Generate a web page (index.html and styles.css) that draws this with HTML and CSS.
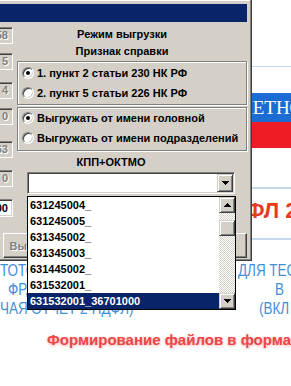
FILE: index.html
```html
<!DOCTYPE html>
<html lang="ru">
<head>
<meta charset="utf-8">
<title>Режим выгрузки</title>
<link rel="stylesheet" href="styles.css">
</head>
<body>
<div class="site">
  <div class="site-top"></div>
  <div class="band-blue"><span class="band-text">ОТЧЕТНОСТЬ</span></div>
  <div class="band-red"></div>
  <div class="site-gap"></div>
  <div class="headline"><span class="headline-text">2-НДФЛ 2024</span></div>
  <div class="lines">
    <div class="line"><span class="seg seg-a1">ТОТО</span><span class="seg">ДЛЯ ТЕСТ</span></div>
    <div class="line"><span class="seg seg-a2">ФР,</span><span class="seg">В</span></div>
    <div class="line"><span class="seg seg-a3">ЧАЯ ОТЧЕТ 2-НДФЛ)</span><span class="seg">(ВКЛ</span></div>
  </div>
  <div class="promo">Формирование файлов в формате</div>
</div>

<div class="win">
  <div class="titlebar"></div>
  <div class="client">
    <div class="side">
      <div class="field f1">58</div>
      <div class="field f2">5</div>
      <div class="field f3">4</div>
      <div class="field f4">0</div>
      <div class="field f5">63</div>
      <div class="field f6">0</div>
      <div class="field field-on f7">00</div>
    </div>
    <div class="main">
      <div class="cap cap-first">Режим выгрузки</div>
      <div class="cap cap-second">Признак справки</div>
      <div class="group">
        <div class="radio"><span class="dot dot-on"></span>1. пункт 2 статьи 230 НК РФ</div>
        <div class="radio"><span class="dot"></span>2. пункт 5 статьи 226 НК РФ</div>
      </div>
      <div class="group group-second">
        <div class="radio"><span class="dot dot-on"></span>Выгружать от имени головной</div>
        <div class="radio"><span class="dot"></span>Выгружать от имени подразделений</div>
      </div>
      <div class="cap cap-kpp">КПП+ОКТМО</div>
      <div class="combo">
        <span class="sbtn combo-btn"><svg width="7" height="4" viewBox="0 0 7 4" shape-rendering="crispEdges"><rect x="0" y="0" width="7" height="1"/><rect x="1" y="1" width="5" height="1"/><rect x="2" y="2" width="3" height="1"/><rect x="3" y="3" width="1" height="1"/></svg></span>
      </div>
    </div>
  </div>
  <div class="buttons">
    <div class="btn btn-ok">Выгрузить</div>
    <div class="btn btn-cancel">Отмена</div>
  </div>
</div>

<div class="droplist">
  <div class="items">
    <div class="item">631245004_</div>
    <div class="item">631245005_</div>
    <div class="item">631345002_</div>
    <div class="item">631345003_</div>
    <div class="item">631445002_</div>
    <div class="item">631532001_</div>
    <div class="item item-sel">631532001_36701000</div>
  </div>
  <div class="vscroll">
    <span class="sbtn sb-arrow"><svg width="7" height="4" viewBox="0 0 7 4" shape-rendering="crispEdges"><rect x="3" y="0" width="1" height="1"/><rect x="2" y="1" width="3" height="1"/><rect x="1" y="2" width="5" height="1"/><rect x="0" y="3" width="7" height="1"/></svg></span>
    <div class="track"><span class="sbtn thumb"></span></div>
    <span class="sbtn sb-arrow"><svg width="7" height="4" viewBox="0 0 7 4" shape-rendering="crispEdges"><rect x="0" y="0" width="7" height="1"/><rect x="1" y="1" width="5" height="1"/><rect x="2" y="2" width="3" height="1"/><rect x="3" y="3" width="1" height="1"/></svg></span>
  </div>
</div>
</body>
</html>
```

FILE: styles.css
```css
html, body {
  margin: 0;
  padding: 0;
  background: #fff;
}

body {
  width: 291px;
  height: 386px;
  overflow: hidden;
  position: relative;
  font-family: "Liberation Sans", Arial, sans-serif;
}

/* ---------- web page behind the dialog ---------- */
.site {
  width: 291px;
  overflow: hidden;
}

.site-top {
  height: 66px;
  border-bottom: 1px solid #c4d8ee;
}

.band-blue {
  margin-top: 26px;
  height: 29px;
  background: #1c6cd3;
  white-space: nowrap;
  overflow: hidden;
  padding-left: 215px;
  box-sizing: border-box;
  font-family: "Liberation Serif", "Times New Roman", serif;
  font-size: 19px;
  line-height: 29px;
  color: #fff;
}

.band-red {
  height: 26px;
  background: #ee1c24;
}

.site-gap {
  height: 39px;
  border-bottom: 2px solid #c4d8ee;
}

.headline {
  height: 49px;
  border-bottom: 2px solid #c4d8ee;
  white-space: nowrap;
  overflow: hidden;
  padding-left: 195px;
  font-weight: bold;
  font-size: 22px;
  line-height: 44px;
  color: #ea3a1e;
}

.lines {
  margin-top: 21px;
  color: #3f8fd8;
  font-size: 16px;
  line-height: 19px;
}

.line {
  display: flex;
  white-space: nowrap;
  height: 19px;
}

.seg {
  flex: none;
  transform: scaleX(0.84);
  transform-origin: left center;
}

.seg-a1 { width: 238px; }
.seg-a2 { width: 267px; margin-left: 8px; }
.seg-a3 { width: 259px; }

.promo {
  margin-top: 12px;
  padding-left: 47px;
  white-space: nowrap;
  font-weight: bold;
  font-size: 15px;
  line-height: 20px;
  color: #ec4646;
  text-shadow: 0 1px 3px rgba(236, 70, 70, 0.45);
}

/* ---------- dialog window ---------- */
.win {
  position: absolute;
  left: 0;
  top: 0;
  width: 252px;
  box-sizing: border-box;
  background: #d4d0c8;
  padding: 4px 4px 2px 0;
  border-right: 1px solid #404040;
  border-bottom: 1px solid #404040;
  box-shadow: inset -1px -1px 0 #808080, inset 0 1px 0 #fff;
  font-size: 11px;
  font-weight: bold;
  color: #000;
}

.titlebar {
  height: 18px;
  background: #0a246a;
}

.client {
  display: flex;
  align-items: flex-start;
}

.side {
  width: 13px;
  flex: none;
  display: flex;
  flex-direction: column;
}

.field {
  margin-left: -27px;
  width: 40px;
  height: 17px;
  box-sizing: border-box;
  border: 1px solid;
  border-color: #808080 #fff #fff #808080;
  box-shadow: inset 1px 1px 0 #404040, inset -1px -1px 0 #d4d0c8;
  background: #d4d0c8;
  color: #808080;
  text-shadow: 1px 1px 0 #fff;
  text-align: right;
  padding-right: 4px;
  line-height: 15px;
}

.field-on {
  background: #fff;
  color: #000;
  text-shadow: none;
  height: 18px;
  line-height: 16px;
}

.f1 { margin-top: 5px; }
.f2 { margin-top: 9px; }
.f3 { margin-top: 12px; }
.f4 { margin-top: 9px; }
.f5 { margin-top: 16px; }
.f6 { margin-top: 12px; }
.f7 { margin-top: 12px; }

.main {
  margin-left: 4px;
  width: 230px;
  flex: none;
}

.cap {
  line-height: 13px;
  text-align: center;
  white-space: nowrap;
}

.cap-first { margin-top: 6px; margin-right: 20px; }
.cap-second { margin-top: 4px; margin-right: 20px; }
.cap-kpp { margin-top: 5px; margin-right: 42px; }

.group {
  margin-top: 3px;
  height: 44px;
  box-sizing: border-box;
  border: 1px solid #808080;
  box-shadow: 1px 1px 0 #fff, inset 1px 1px 0 #fff;
  padding-top: 1px;
}

.group-second {
  margin-top: 2px;
  padding-top: 0;
}

.radio {
  height: 20px;
  display: flex;
  align-items: center;
  padding-left: 4px;
  gap: 3px;
  white-space: nowrap;
}

.dot {
  position: relative;
  flex: none;
  width: 12px;
  height: 12px;
  box-sizing: border-box;
  border-radius: 50%;
  border: 1px solid;
  border-color: #808080 #fff #fff #808080;
  box-shadow: inset 1px 1px 0 #404040, inset -1px -1px 0 #d4d0c8;
  background: #fff;
}

.dot-on::after {
  content: "";
  position: absolute;
  left: 3px;
  top: 3px;
  width: 4px;
  height: 4px;
  border-radius: 50%;
  background: #000;
}

.combo {
  margin-top: 3px;
  margin-left: 10px;
  width: 208px;
  height: 22px;
  box-sizing: border-box;
  border: 1px solid;
  border-color: #808080 #fff #fff #808080;
  box-shadow: inset 1px 1px 0 #404040, inset -1px -1px 0 #d4d0c8;
  background: #fff;
  padding: 1px;
  display: flex;
  justify-content: flex-end;
}

.sbtn {
  display: flex;
  align-items: center;
  justify-content: center;
  box-sizing: border-box;
  background: #d4d0c8;
  border: 1px solid;
  border-color: #d4d0c8 #404040 #404040 #d4d0c8;
  box-shadow: inset 1px 1px 0 #fff, inset -1px -1px 0 #808080;
}

.combo-btn {
  width: 16px;
  height: 18px;
}

.buttons {
  margin-top: 16px;
  display: flex;
  justify-content: space-between;
  padding-left: 3px;
}

.btn {
  height: 25px;
  box-sizing: border-box;
  border: 1px solid;
  border-color: #fff #404040 #404040 #fff;
  box-shadow: inset -1px -1px 0 #808080;
  display: flex;
  align-items: center;
  justify-content: center;
  color: #808080;
  text-shadow: 1px 1px 0 #fff;
}

.btn-ok { width: 72px; }
.btn-cancel { width: 82px; }

/* ---------- open dropdown list ---------- */
.droplist {
  position: absolute;
  left: 27px;
  top: 196px;
  width: 209px;
  height: 114px;
  box-sizing: border-box;
  border: 1px solid #000;
  background: #fff;
  display: flex;
  font-size: 11px;
  font-weight: bold;
}

.items {
  flex: 1;
}

.item {
  height: 16px;
  line-height: 16px;
  padding-left: 2px;
  white-space: nowrap;
}

.item-sel {
  background: #0a246a;
  color: #fff;
}

.vscroll {
  width: 16px;
  flex: none;
  display: flex;
  flex-direction: column;
}

.sb-arrow {
  height: 16px;
  flex: none;
}

.track {
  flex: 1;
  padding-top: 7px;
  background: repeating-conic-gradient(#fff 0 25%, #d4d0c8 0 50%) 0 0 / 2px 2px;
}

.thumb {
  height: 16px;
}
```
